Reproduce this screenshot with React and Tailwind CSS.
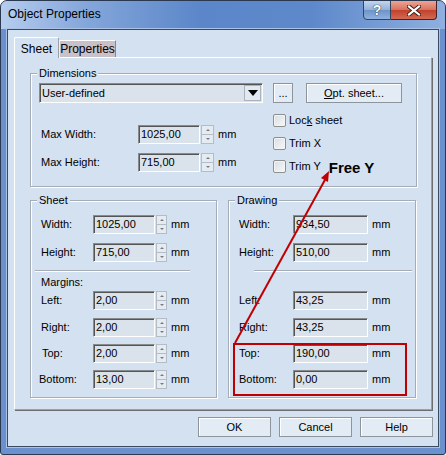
const field = 'bg-[#dae2eb] border border-t-[#8a8a8a] border-l-[#8a8a8a] border-b-white border-r-white shadow-[inset_1px_1px_0_#555] pl-[2px] flex items-center text-[11px] text-black';
const btn = 'h-[20px] bg-[#e3ebf4] border border-[#8d949c] shadow-[inset_1px_1px_0_#fff] flex items-center justify-center text-[11px]';

function Spin({ w, h }) {
  return (
    <div className="flex flex-col ml-px" style={{ width: w, height: h }}>
      <div className="flex-1 bg-[#e4ebf3] border border-[#b4bcc6] flex items-center justify-center">
        <div className="w-0 h-0 border-l-[2px] border-r-[2px] border-b-[2px] border-l-transparent border-r-transparent border-b-[#7a7a7a]" />
      </div>
      <div className="flex-1 bg-[#e4ebf3] border border-t-0 border-[#b4bcc6] flex items-center justify-center">
        <div className="w-0 h-0 border-l-[2px] border-r-[2px] border-t-[2px] border-l-transparent border-r-transparent border-t-[#7a7a7a]" />
      </div>
    </div>
  );
}

function Group({ label, className, children }) {
  return (
    <div className={`relative border border-[#a3acb7] shadow-[inset_1px_1px_0_#fff,1px_1px_0_#fff] ${className}`}>
      <span className="absolute left-[6px] top-[-8px] px-[2px] bg-[#d4e1f0] leading-[14px] text-[11px]">{label}</span>
      {children}
    </div>
  );
}

function Row({ label, value, mt, labelW, inputW, spin, spinW, labelPl = 'pl-[10px]' }) {
  return (
    <div className="flex items-center" style={{ marginTop: mt }}>
      <div className={`${labelPl} shrink-0`} style={{ width: labelW }}>{label}</div>
      <div className={`${field} h-[19px]`} style={{ width: inputW }}>{value}</div>
      {spin && <Spin w={spinW} h={19} />}
      <span className="ml-[4px]">mm</span>
    </div>
  );
}

function Check({ children, mt }) {
  return (
    <div className="flex items-center h-[13px]" style={{ marginTop: mt }}>
      <div className="w-[13px] h-[13px] border border-[#8e8f8f] rounded-[2px] bg-[linear-gradient(135deg,#d9dde2,#f7f8f9)] shadow-[inset_0_0_0_1px_#f4f4f4]" />
      <span className="ml-[3px] leading-[13px]">{children}</span>
    </div>
  );
}

export default function App() {
  return (
    <div className="relative w-[446px] h-[455px] bg-[#6a91cd] border border-[#2a3850] rounded-t-[7px] rounded-b-[3px] flex flex-col font-['Liberation_Sans',Arial,sans-serif] text-[11px] text-black overflow-hidden">
      {/* title bar */}
      <div className="h-[28px] flex items-start bg-[linear-gradient(to_right,#b6cdee,#86a8db_18%,#5b86c9_45%,#5d88ca_70%,#8fb0e0)]">
        <div className="pl-[7px] pt-[6px] text-[12px] leading-[14px]">Object Properties</div>
        <div className="ml-auto mr-[8px] -mt-px flex">
          <div className="w-[28px] h-[20px] border border-[#34445c] rounded-bl-[4px] bg-[linear-gradient(#c3d5ee,#93b0da_50%,#6e93c9_51%,#8fb1de)] flex items-center justify-center text-white font-bold text-[14px] [text-shadow:0_0_1px_#233,0_0_1px_#233]">?</div>
          <div className="w-[46px] h-[20px] border border-l-0 border-[#4a2020] rounded-br-[4px] bg-[linear-gradient(#eaa596,#d8705c_50%,#c3412c_51%,#d26a52)] flex items-center justify-center">
            <svg width="14" height="11" viewBox="0 0 14 11">
              <path d="M2 1.5 L12 9.5 M12 1.5 L2 9.5" stroke="#3b1a14" strokeWidth="4" strokeLinecap="square" />
              <path d="M2 1.5 L12 9.5 M12 1.5 L2 9.5" stroke="#fff" strokeWidth="2.2" strokeLinecap="square" />
            </svg>
          </div>
        </div>
      </div>

      {/* client area */}
      <div className="mx-[6px] h-[418px] border border-[#3a4a60] bg-[#d4e1f0] shadow-[0_0_0_1px_#a9c2e6] flex flex-col">
        {/* tabs */}
        <div className="pl-[6px] pt-[7px] flex items-end">
          <div className="relative z-10 h-[21px] w-[45px] -mb-px bg-[#d4e1f0] border border-b-0 border-t-white border-l-white border-r-[#9aa0a8] rounded-t-[2px] flex items-center justify-center text-[12px] pt-[2px]">Sheet</div>
          <div className="h-[17px] w-[57px] bg-[#c9c1c9] border border-b-0 border-t-white border-l-[#eee] border-r-[#888] flex items-center justify-center text-[12px]">Properties</div>
        </div>
        {/* panel */}
        <div className="ml-[6px] w-[418px] h-[353px] border border-t-white border-l-white border-r-[#a0a0a0] border-b-[#a0a0a0] shadow-[1px_1px_0_#6e6e6e] pl-[15px] pt-[15px]">
          <Group label="Dimensions" className="w-[387px] h-[114px]">
            <div className="pl-[8px] pt-[9px] flex">
              <div className={`${field} w-[224px] h-[20px] pl-[2px]`}>
                <span className="flex-1">User-defined</span>
                <div className="w-[17px] h-[16px] mr-px bg-[#e1e9f2] border border-[#a9b2bd] flex items-center justify-center">
                  <div className="w-0 h-0 border-l-[5px] border-r-[5px] border-t-[6px] border-l-transparent border-r-transparent border-t-black" />
                </div>
              </div>
              <div className={`${btn} ml-[10px] w-[20px]`}>...</div>
              <div className={`${btn} ml-[13px] w-[96px]`}><span><span className="underline">O</span>pt. sheet...</span></div>
            </div>
            <div className="pl-[8px] flex">
              <div className="w-[234px]">
                <Row label="Max Width:" value="1025,00" mt={22} labelW={99} labelPl="pl-[2px]" inputW={62} spin spinW={13} />
                <Row label="Max Height:" value="715,00" mt={9} labelW={99} labelPl="pl-[2px]" inputW={62} spin spinW={13} />
              </div>
              <div className="flex flex-col">
                <Check mt={11}>Loc<span className="underline">k</span> sheet</Check>
                <Check mt={10}>Trim X</Check>
                <div className="flex items-center mt-[7px]">
                  <Check>Trim Y</Check>
                  <span className="ml-[8px] mt-[3px] font-bold text-[15px] leading-[15px]">Free Y</span>
                </div>
              </div>
            </div>
          </Group>

          <div className="flex mt-[13px]">
            <Group label="Sheet" className="w-[187px] h-[198px]">
              <Row label="Width:" value="1025,00" mt={14} labelW={62} inputW={62} spin spinW={11} />
              <Row label="Height:" value="715,00" mt={9} labelW={62} inputW={62} spin spinW={11} />
              <div className="ml-[4px] mt-[8px] w-[155px] h-[2px] border-t border-t-[#a3acb7] border-b border-b-white" />
              <div className="pl-[10px] mt-[4px] leading-[13px]">Margins:</div>
              <Row label="Left:" value="2,00" mt={2} labelW={62} inputW={62} spin spinW={11} />
              <Row label="Right:" value="2,00" mt={8} labelW={62} inputW={62} spin spinW={11} />
              <Row label="Top:" value="2,00" mt={7} labelW={62} inputW={62} spin spinW={11} labelPl="pl-[11px]" />
              <Row label="Bottom:" value="13,00" mt={7} labelW={62} inputW={62} spin spinW={11} labelPl="pl-[8px]" />
            </Group>
            <Group label="Drawing" className="ml-[11px] w-[188px] h-[198px]">
              <Row label="Width:" value="934,50" mt={14} labelW={64} inputW={75} />
              <Row label="Height:" value="510,00" mt={9} labelW={64} inputW={75} />
              <div className="ml-[25px] mt-[8px] w-[158px] h-[2px] border-t border-t-[#a3acb7] border-b border-b-white" />
              <Row label="Left:" value="43,25" mt={19} labelW={64} inputW={75} />
              <Row label="Right:" value="43,25" mt={8} labelW={64} inputW={75} />
              <Row label="Top:" value="190,00" mt={7} labelW={64} inputW={75} />
              <Row label="Bottom:" value="0,00" mt={7} labelW={64} inputW={75} />
            </Group>
          </div>
        </div>

        {/* buttons */}
        <div className="mt-[7px] pr-[5px] flex justify-end gap-[8px]">
          <div className={`${btn} w-[73px]`}>OK</div>
          <div className={`${btn} w-[73px]`}>Cancel</div>
          <div className={`${btn} w-[73px]`}>Help</div>
        </div>
      </div>

      {/* annotation overlay */}
      <svg className="absolute left-[-1px] top-[-1px] pointer-events-none" width="446" height="455" viewBox="0 0 446 455">
        <rect x="234" y="344" width="172" height="51" fill="none" stroke="#c00000" strokeWidth="2" />
        <line x1="235" y1="343" x2="326" y2="178" stroke="#c00000" strokeWidth="2" />
        <polygon points="329,171 328,182 321,178" fill="#c00000" />
      </svg>
    </div>
  );
}
